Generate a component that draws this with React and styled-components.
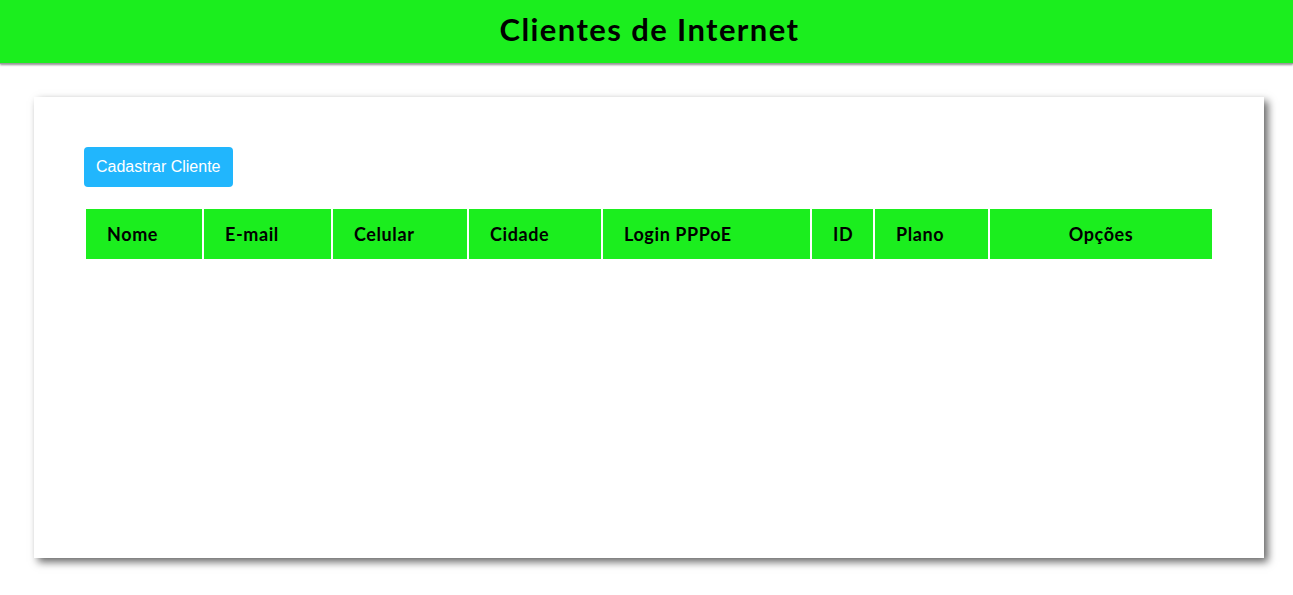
import React from "react";
import styled, { createGlobalStyle } from "styled-components";

const Global = createGlobalStyle`
  html, body { margin: 0; padding: 0; background: #ffffff; }
  body { font-family: Lato, "Open Sans", sans-serif; }
`;

const GREEN = "#1bee1e";

const Header = styled.header`
  height: 64px;
  background: ${GREEN};
  display: flex;
  align-items: center;
  justify-content: center;
  box-shadow: 0 1px 2px rgba(0, 0, 0, 0.45);
  border-bottom: 1px solid #9a9a9a;
  box-sizing: border-box;
`;

const Title = styled.h1`
  margin: 0;
  font-family: Lato, sans-serif;
  font-size: 31px;
  font-weight: 700;
  letter-spacing: 1.4px;
  color: #000;
  padding: 0 0 6px 6px;
`;

const Main = styled.main`
  padding: 33px 29px 30px 34px;
`;

const Card = styled.section`
  background: #fff;
  height: 461px;
  box-sizing: border-box;
  padding: 50px;
  box-shadow: 4px 4px 8px rgba(0, 0, 0, 0.6);
`;

const Button = styled.button`
  display: block;
  height: 40px;
  padding: 0 12px;
  border: none;
  border-radius: 4px;
  background: #21b6fd;
  color: #fff;
  font-family: "Liberation Sans", Arial, sans-serif;
  font-size: 16px;
  cursor: pointer;
  margin-bottom: 20px;
`;

const Table = styled.table`
  width: 1130px;
  table-layout: fixed;
  border-collapse: separate;
  border-spacing: 2px;
`;

const Th = styled.th`
  background: ${GREEN};
  height: 50px;
  padding: 0 0 0 ${(p) => (p.$center ? 0 : 21)}px;
  text-align: ${(p) => (p.$center ? "center" : "left")};
  width: ${(p) => p.$w}px;
  font-family: Lato, sans-serif;
  font-size: 18px;
  font-weight: 700;
  letter-spacing: 0.6px;
  color: #000;
`;

const cols = [
  { label: "Nome", w: 95 },
  { label: "E-mail", w: 106 },
  { label: "Celular", w: 113 },
  { label: "Cidade", w: 111 },
  { label: "Login PPPoE", w: 186 },
  { label: "ID", w: 40 },
  { label: "Plano", w: 92 },
  { label: "Opções", w: 222, center: true },
];

export default function App() {
  return (
    <>
      <Global />
      <Header>
        <Title>Clientes de Internet</Title>
      </Header>
      <Main>
        <Card>
          <Button>Cadastrar Cliente</Button>
          <Table>
            <thead>
              <tr>
                {cols.map((c) => (
                  <Th key={c.label} $w={c.w} $center={c.center}>
                    {c.label}
                  </Th>
                ))}
              </tr>
            </thead>
            <tbody />
          </Table>
        </Card>
      </Main>
    </>
  );
}
